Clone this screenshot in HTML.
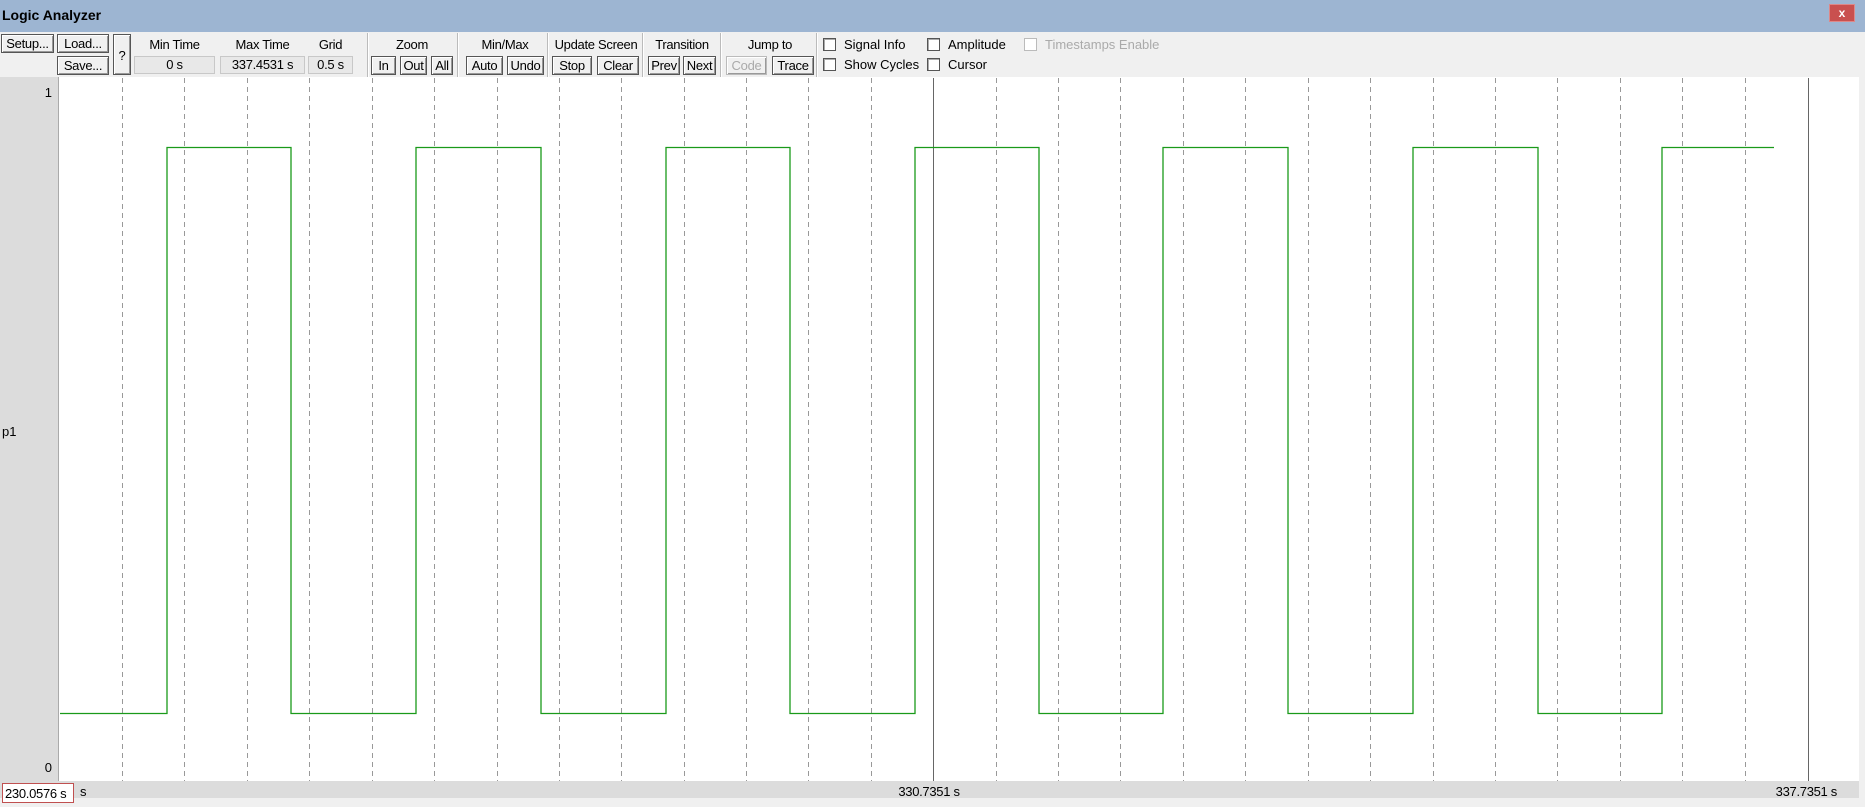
<!DOCTYPE html>
<html><head><meta charset="utf-8"><style>
*{margin:0;padding:0;box-sizing:border-box}
body{width:1865px;height:807px;overflow:hidden;background:#f0f0f0;font-family:"Liberation Sans",Arial,sans-serif;font-size:13px;color:#000;position:relative}
.a{position:absolute;white-space:nowrap}
.title{left:0;top:0;width:1865px;height:32px;background:#9db5d2;}
.title span{position:absolute;left:2px;top:7px;font-weight:bold;font-size:14px}
.close{left:1829px;top:4px;width:26px;height:18px;background:#c9504f;border:1px solid #d88;color:#fff;font-weight:bold;font-size:12px;text-align:center;line-height:16px}
.btn{position:absolute;height:19px;border:1px solid #555;background:#f0f0f0;box-shadow:inset 1px 1px #fff,inset -1px -1px #999;text-align:center;line-height:17px;font-size:13px;letter-spacing:-0.3px}
.box{position:absolute;height:18px;background:#e8e8e8;border:1px solid #c8c8c8;text-align:center;line-height:16px;letter-spacing:-0.3px}
.lbl{position:absolute;text-align:center;letter-spacing:-0.3px}
.sep{position:absolute;top:33px;width:2px;height:44px;border-left:1px solid #bbb;border-right:1px solid #fff}
.cb{position:absolute;width:13px;height:13px;border:1px solid #555;background:#fff;box-shadow:inset 1px 1px #aaa}
</style></head><body>
<div class="a title"><span>Logic Analyzer</span></div>
<div class="a close">x</div>

<div class="btn" style="left:1px;top:34px;width:53px">Setup...</div>
<div class="btn" style="left:57px;top:34px;width:52px">Load...</div>
<div class="btn" style="left:57px;top:56px;width:52px">Save...</div>
<div class="btn" style="left:113px;top:34px;width:18px;height:41px;line-height:41px">?</div>

<div class="lbl" style="left:134px;top:37px;width:81px">Min Time</div>
<div class="box" style="left:134px;top:56px;width:81px">0 s</div>
<div class="lbl" style="left:220px;top:37px;width:85px">Max Time</div>
<div class="box" style="left:220px;top:56px;width:85px">337.4531 s</div>
<div class="lbl" style="left:308px;top:37px;width:45px">Grid</div>
<div class="box" style="left:308px;top:56px;width:45px">0.5 s</div>
<div class="sep" style="left:367px"></div>

<div class="lbl" style="left:371px;top:37px;width:82px">Zoom</div>
<div class="btn" style="left:371px;top:56px;width:25px">In</div>
<div class="btn" style="left:400px;top:56px;width:27px">Out</div>
<div class="btn" style="left:431px;top:56px;width:22px">All</div>
<div class="sep" style="left:457px"></div>

<div class="lbl" style="left:466px;top:37px;width:78px">Min/Max</div>
<div class="btn" style="left:466px;top:56px;width:37px">Auto</div>
<div class="btn" style="left:507px;top:56px;width:37px">Undo</div>
<div class="sep" style="left:547px"></div>

<div class="lbl" style="left:550px;top:37px;width:92px">Update Screen</div>
<div class="btn" style="left:552px;top:56px;width:40px">Stop</div>
<div class="btn" style="left:597px;top:56px;width:42px">Clear</div>
<div class="sep" style="left:642px"></div>

<div class="lbl" style="left:646px;top:37px;width:72px">Transition</div>
<div class="btn" style="left:648px;top:56px;width:32px">Prev</div>
<div class="btn" style="left:683px;top:56px;width:33px">Next</div>
<div class="sep" style="left:720px"></div>

<div class="lbl" style="left:726px;top:37px;width:88px">Jump to</div>
<div class="btn" style="left:726px;top:56px;width:41px;color:#aaa;border-color:#bbb">Code</div>
<div class="btn" style="left:772px;top:56px;width:42px">Trace</div>
<div class="sep" style="left:816px"></div>

<div class="cb" style="left:823px;top:38px"></div><div class="a" style="left:844px;top:37px">Signal Info</div>
<div class="cb" style="left:823px;top:58px"></div><div class="a" style="left:844px;top:57px">Show Cycles</div>
<div class="cb" style="left:927px;top:38px"></div><div class="a" style="left:948px;top:37px">Amplitude</div>
<div class="cb" style="left:927px;top:58px"></div><div class="a" style="left:948px;top:57px">Cursor</div>
<div class="cb" style="left:1024px;top:38px;border-color:#bbb;box-shadow:none"></div><div class="a" style="left:1045px;top:37px;color:#aaa">Timestamps Enable</div>

<svg class="a" style="left:0;top:77px" width="1865" height="730" viewBox="0 77 1865 730">
<rect x="0" y="77" width="1865" height="730" fill="#f0f0f0"/>
<rect x="59" y="77" width="1800" height="704" fill="#fff"/>
<rect x="0" y="77" width="59" height="704" fill="#dcdcdc"/>
<line x1="58.5" y1="77" x2="58.5" y2="781" stroke="#aaa"/>
<g stroke="#999" stroke-width="1" stroke-dasharray="5,4">
<line x1="122.5" y1="78" x2="122.5" y2="781"/><line x1="184.5" y1="78" x2="184.5" y2="781"/><line x1="247.5" y1="78" x2="247.5" y2="781"/><line x1="309.5" y1="78" x2="309.5" y2="781"/><line x1="372.5" y1="78" x2="372.5" y2="781"/><line x1="434.5" y1="78" x2="434.5" y2="781"/><line x1="497.5" y1="78" x2="497.5" y2="781"/><line x1="559.5" y1="78" x2="559.5" y2="781"/><line x1="621.5" y1="78" x2="621.5" y2="781"/><line x1="684.5" y1="78" x2="684.5" y2="781"/><line x1="746.5" y1="78" x2="746.5" y2="781"/><line x1="808.5" y1="78" x2="808.5" y2="781"/><line x1="871.5" y1="78" x2="871.5" y2="781"/>
<line x1="996.5" y1="78" x2="996.5" y2="781"/><line x1="1058.5" y1="78" x2="1058.5" y2="781"/><line x1="1120.5" y1="78" x2="1120.5" y2="781"/><line x1="1183.5" y1="78" x2="1183.5" y2="781"/><line x1="1245.5" y1="78" x2="1245.5" y2="781"/><line x1="1308.5" y1="78" x2="1308.5" y2="781"/><line x1="1370.5" y1="78" x2="1370.5" y2="781"/><line x1="1433.5" y1="78" x2="1433.5" y2="781"/><line x1="1495.5" y1="78" x2="1495.5" y2="781"/><line x1="1557.5" y1="78" x2="1557.5" y2="781"/><line x1="1620.5" y1="78" x2="1620.5" y2="781"/><line x1="1682.5" y1="78" x2="1682.5" y2="781"/><line x1="1745.5" y1="78" x2="1745.5" y2="781"/>
</g>
<line x1="933.5" y1="78" x2="933.5" y2="781" stroke="#666"/>
<line x1="1808.5" y1="78" x2="1808.5" y2="781" stroke="#666"/>
<polyline fill="none" stroke="#1a9a1a" stroke-width="1.3" points="60,713.5 167,713.5 167,147.5 291,147.5 291,713.5 416,713.5 416,147.5 541,147.5 541,713.5 666,713.5 666,147.5 790,147.5 790,713.5 915,713.5 915,147.5 1039,147.5 1039,713.5 1163,713.5 1163,147.5 1288,147.5 1288,713.5 1413,713.5 1413,147.5 1538,147.5 1538,713.5 1662,713.5 1662,147.5 1774,147.5"/>
<rect x="0" y="781" width="1859" height="17" fill="#dcdcdc"/>
<rect x="2.5" y="783.5" width="71" height="19" fill="#fff" stroke="#c05050"/>
<text x="5" y="798" font-family="Liberation Sans" font-size="13" letter-spacing="-0.3">230.0576 s</text>
<text x="80" y="796" font-family="Liberation Sans" font-size="13">s</text>
<text x="929" y="796" font-family="Liberation Sans" font-size="13" text-anchor="middle" letter-spacing="-0.3">330.7351 s</text>
<text x="1837" y="796" font-family="Liberation Sans" font-size="13" text-anchor="end" letter-spacing="-0.3">337.7351 s</text>
<text x="52" y="97" font-family="Liberation Sans" font-size="13" text-anchor="end">1</text>
<text x="52" y="772" font-family="Liberation Sans" font-size="13" text-anchor="end">0</text>
<text x="2" y="436" font-family="Liberation Sans" font-size="13">p1</text>
</svg>
</body></html>
